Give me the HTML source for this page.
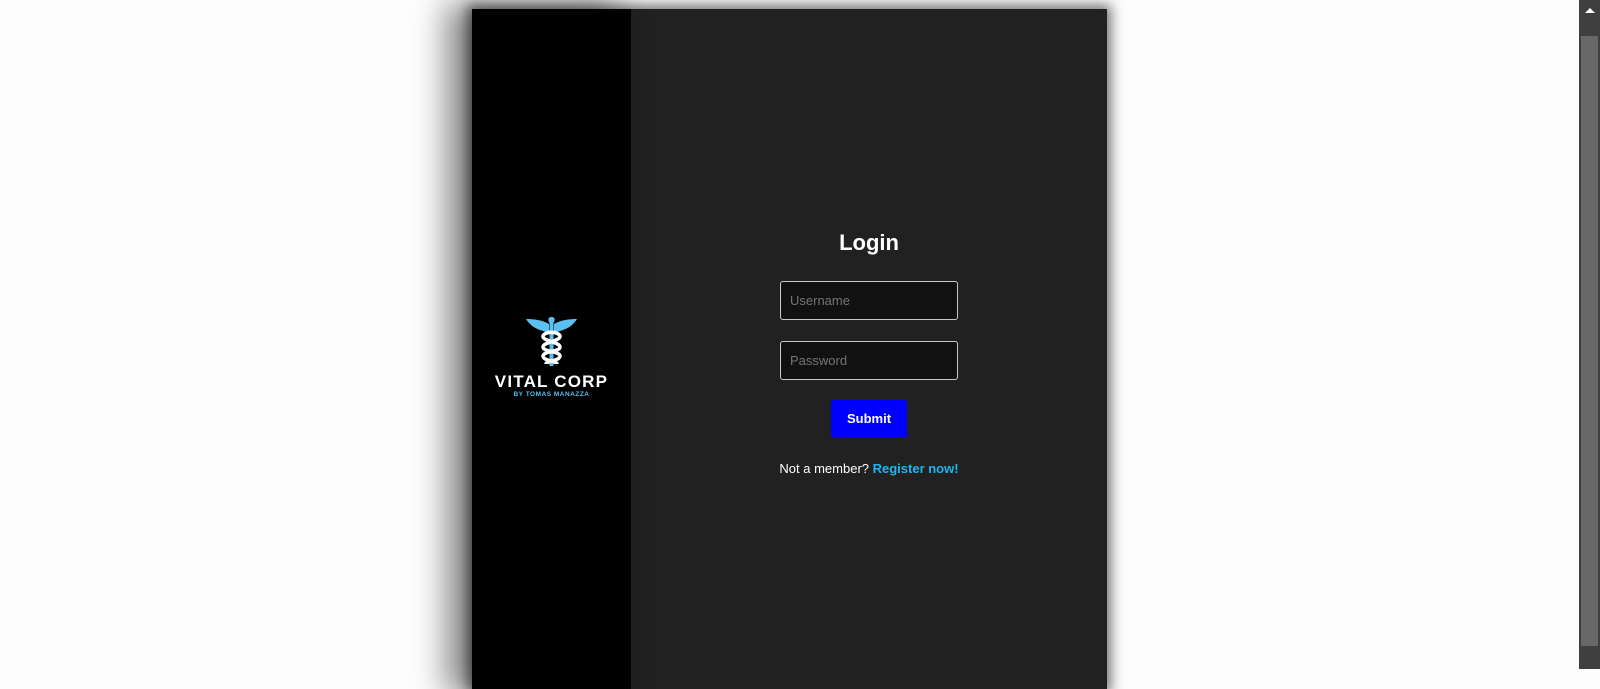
<!DOCTYPE html>
<html><head><meta charset="utf-8"><style>
html,body{margin:0;padding:0;width:1600px;height:669px;overflow:hidden;background:#fdfdfd;font-family:"Liberation Sans",sans-serif;}
.card{position:absolute;left:472px;top:9px;width:635px;height:680px;background:#212121;box-shadow:0 0 12px 4px rgba(0,0,0,0.55);}
.left{position:absolute;left:0;top:0;width:159px;height:100%;background:#000;box-shadow:-20px 0 30px 6px rgba(0,0,0,0.45);}
h1{position:absolute;left:159px;width:476px;top:221px;margin:0;text-align:center;color:#fff;font-size:22px;font-weight:bold;}
.inp{position:absolute;left:308px;width:178px;height:39px;box-sizing:border-box;border:1px solid #c8c8c8;border-radius:3px;background:#111;color:#757575;font-size:13px;line-height:37px;padding-left:9px;}
.btn{position:absolute;left:359px;top:391px;width:76px;height:37px;background:#0000ff;border-radius:3px;color:#fff;font-weight:bold;font-size:13px;text-align:center;line-height:37px;}
.txt{position:absolute;left:159px;width:476px;top:452px;text-align:center;color:#fff;font-size:13px;}
.txt b{color:#1cb6f0;}
.logo{position:absolute;left:0;width:159px;top:363px;text-align:center;color:#fff;font-weight:bold;font-size:17px;letter-spacing:1.2px;}
.sub{position:absolute;left:0;width:159px;top:382px;text-align:center;color:#5bc0f0;font-weight:bold;font-size:6.5px;letter-spacing:0.5px;}
.sb{position:absolute;left:1579px;top:0;width:21px;height:669px;background:#3f3f3f;}
.th{position:absolute;left:2px;top:36px;width:17px;height:610px;background:#686868;}
</style></head><body>
<div class="card">
<div class="left">
<svg style="position:absolute;left:54px;top:308px" width="51" height="49" viewBox="0 0 51 49">
<path d="M23 7 C16 3 8 2 0 2 C3 7 8 11 14 13 C17 14 20 15 23 16Z" fill="#5bc0f0"/>
<path d="M28 7 C35 3 43 2 51 2 C48 7 43 11 37 13 C34 14 31 15 28 16Z" fill="#5bc0f0"/>
<circle cx="25.5" cy="3" r="3.2" fill="#5bc0f0"/>
<rect x="23.5" y="5" width="4" height="44" fill="#5bc0f0"/>
<path d="M17 19 C19 14 32 14 34 19 C35 24 17 25 17 30 C17 35 34 34 34 39 C34 44 20 44 20 47" fill="none" stroke="#fff" stroke-width="3.5"/>
<path d="M34 19 C32 14 19 14 17 19 C16 24 34 25 34 30 C34 35 17 34 17 39 C17 44 31 44 31 47" fill="none" stroke="#fff" stroke-width="3.5"/>
</svg>
<div class="logo">VITAL CORP</div>
<div class="sub">BY TOMAS MANAZZA</div>
</div>
<h1>Login</h1>
<div class="inp" style="top:272px">Username</div>
<div class="inp" style="top:332px">Password</div>
<div class="btn">Submit</div>
<div class="txt">Not a member? <b>Register now!</b></div>
</div>
<div class="sb"><div style="position:absolute;left:6px;top:8px;width:0;height:0;border-left:5px solid transparent;border-right:5px solid transparent;border-bottom:5px solid #fff;"></div><div class="th"></div></div>
</body></html>
